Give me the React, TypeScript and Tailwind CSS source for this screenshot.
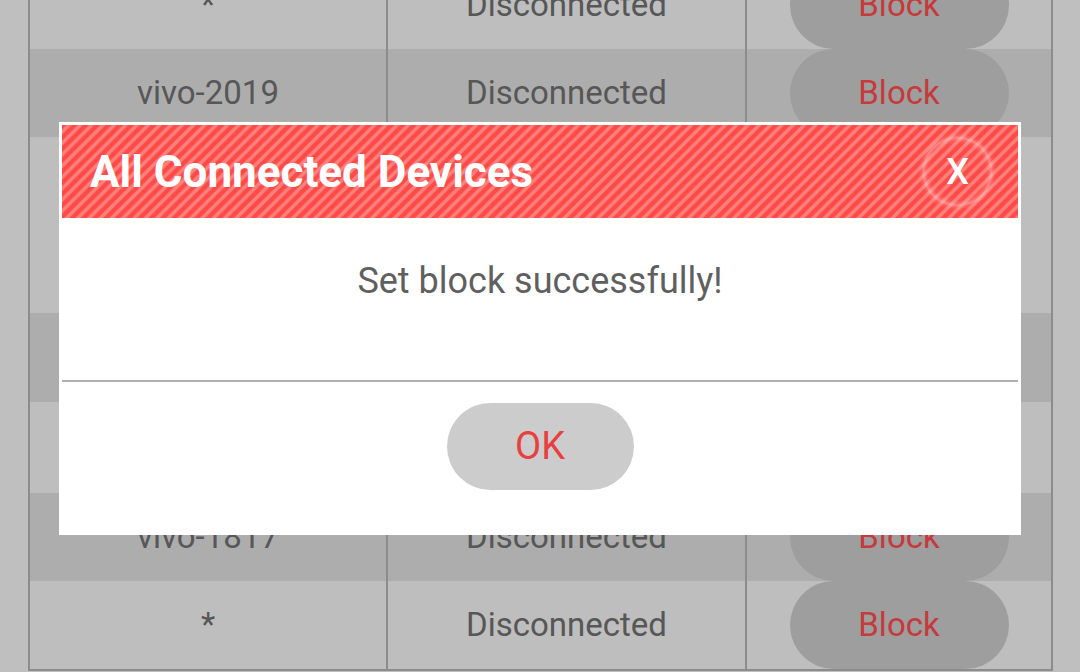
import React from "react";

type Row = { name: string; status: string; dark: boolean; h: string };

const rows: Row[] = [
  { name: "*", status: "Disconnected", dark: false, h: "h-[88px]" },
  { name: "vivo-2019", status: "Disconnected", dark: true, h: "h-[88px]" },
  { name: "*", status: "Disconnected", dark: false, h: "h-[88px]" },
  { name: "*", status: "Disconnected", dark: false, h: "h-[88px]" },
  { name: "vivo-1901", status: "Disconnected", dark: true, h: "h-[89px]" },
  { name: "*", status: "Disconnected", dark: false, h: "h-[91px]" },
  { name: "vivo-1817", status: "Disconnected", dark: true, h: "h-[88px]" },
  { name: "*", status: "Disconnected", dark: false, h: "h-[90px]" },
];

function DeviceRow({ row, last }: { row: Row; last: boolean }) {
  const bg = row.dark ? "bg-[#adadad]" : "bg-[#bebebe]";
  return (
    <div
      className={`grid grid-cols-[358px_359px_308px] ${row.h} ${bg} ${
        last ? "border-b-2 border-[#8c8c8c]" : ""
      }`}
    >
      <div className="flex items-center justify-center border-l-2 border-[#8c8c8c] text-[33px] text-[#575757]">
        {row.name}
      </div>
      <div className="flex items-center justify-center border-l-2 border-[#8c8c8c] text-[33px] text-[#575757]">
        {row.status}
      </div>
      <div className="flex items-center justify-center border-x-2 border-[#8c8c8c]">
        <button className="flex h-full w-[219px] items-center justify-center rounded-full bg-[#9e9e9e] text-[33px] text-[#c53a3b]">
          Block
        </button>
      </div>
    </div>
  );
}

export default function App() {
  return (
    <div
      className="relative h-[672px] w-[1080px] overflow-hidden bg-[#bfbfbf]"
      style={{ fontFamily: "Roboto, 'Noto Sans', sans-serif" }}
    >
      <div className="ml-[28px] mt-[-39px] w-[1025px]">
        {rows.map((r, i) => (
          <DeviceRow key={i} row={r} last={i === rows.length - 1} />
        ))}
      </div>

      {/* modal */}
      <div className="absolute left-[59px] top-[122px] flex h-[413px] w-[962px] flex-col bg-white p-[3px] pb-0">
        <div className="flex h-[93px] items-center justify-between bg-[repeating-linear-gradient(135deg,#ff4b48_0px,#ff4b48_2.5px,#ff807c_4px,#ff807c_6px,#ff4b48_7.5px,#ff4b48_8px)] pl-[28px] pr-[26px]">
          <h2 className="text-[44px] font-bold leading-none text-white">
            All Connected Devices
          </h2>
          <button className="flex h-[69px] w-[69px] items-center justify-center rounded-full text-[36px] font-medium leading-none text-white shadow-[inset_0_0_6px_rgba(255,255,255,0.75),0_0_5px_rgba(255,255,255,0.5)]">
            X
          </button>
        </div>
        <div className="h-[162px] pt-[43px] text-center text-[36px] leading-[40px] text-[#5f5f5f]">
          Set block successfully!
        </div>
        <div className="h-[2px] bg-[#b0b0b0]" />
        <div className="flex flex-1 justify-center pt-[21px]">
          <button className="flex h-[87px] w-[187px] items-center justify-center rounded-full bg-[#cccccc] text-[38px] text-[#e8403f]">
            OK
          </button>
        </div>
      </div>
    </div>
  );
}
